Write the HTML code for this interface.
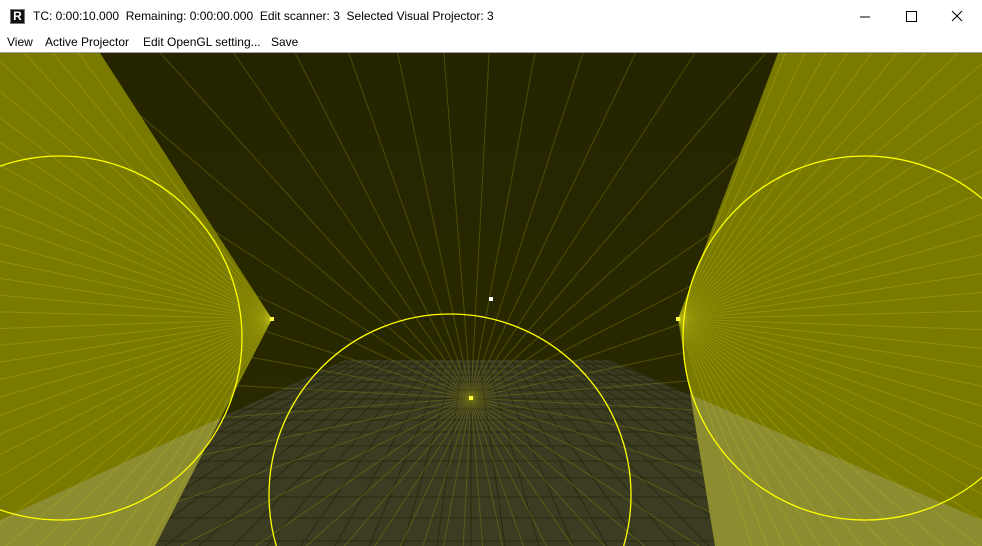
<!DOCTYPE html>
<html><head><meta charset="utf-8"><style>
html,body{margin:0;padding:0;width:982px;height:546px;overflow:hidden;background:#fff;font-family:"Segoe UI","Liberation Sans",sans-serif;}
#title{position:absolute;left:0;top:0;width:982px;height:31px;background:#fff;font-size:12px;color:#000;}
#title .t{position:absolute;left:33px;top:9px;white-space:pre;}
#logo{position:absolute;left:10px;top:9px;width:15px;height:15px;background:#111;border:1px solid #777;box-sizing:border-box;color:#fff;font-weight:bold;font-size:12px;line-height:13px;text-align:center;}
#menu{position:absolute;left:0;top:31px;height:21px;width:982px;font-size:12px;}
#menu span{position:absolute;top:4px;}
#sep{position:absolute;left:0;top:52px;width:982px;height:1px;background:#a0a0a0;}
svg#c{position:absolute;left:0;top:53px;display:block;}
.wb{position:absolute;top:6px;width:46px;height:20px;}
</style></head><body>
<div id="title"><div id="logo">R</div><div class="t">TC: 0:00:10.000  Remaining: 0:00:00.000  Edit scanner: 3  Selected Visual Projector: 3</div>
<svg class="wb" style="left:842px" width="46" height="20"><line x1="18" y1="11" x2="28" y2="11" stroke="#000"/></svg>
<svg class="wb" style="left:888px" width="46" height="20"><rect x="18.5" y="5.5" width="10" height="10" fill="none" stroke="#000"/></svg>
<svg class="wb" style="left:934px" width="46" height="20"><path d="M18 5 L28 15 M28 5 L18 15" stroke="#000"/></svg>
</div>
<div id="menu"><span style="left:7px">View</span><span style="left:45px">Active Projector</span><span style="left:143px">Edit OpenGL setting...</span><span style="left:271px">Save</span></div>
<div id="sep"></div>
<svg id="c" width="982" height="493" viewBox="0 53 982 493">
<defs><linearGradient id="bg" x1="0" y1="0" x2="0" y2="1"><stop offset="0" stop-color="#242400"/><stop offset="1" stop-color="#2b2b00"/></linearGradient>
<clipPath id="fc"><polygon points="0,520 345,360 610,360 982,520 982,546 0,546"/></clipPath>
<clipPath id="cl"><polygon points="0,53 100,53 272,319 155,546 0,546"/></clipPath>
<clipPath id="cr"><polygon points="778,53 982,53 982,546 715,546 678,319"/></clipPath>
</defs>
<rect x="0" y="53" width="982" height="493" fill="url(#bg)"/>
<g id="floor" clip-path="url(#fc)"></g>
<g id="rays"></g>
<g id="cones"></g>
<g fill="none" stroke="#ffff00" stroke-width="1.3">
<circle cx="60" cy="338" r="182"/>
<circle cx="865" cy="338" r="182"/>
<circle cx="450" cy="495" r="181"/>
</g>
<rect x="489" y="297" width="4" height="4" fill="#fff"/>
<rect x="469" y="396" width="4" height="4" fill="#ffff40"/>
<rect x="270" y="317" width="4" height="4" fill="#ffff40"/>
<rect x="676" y="317" width="4" height="4" fill="#ffff40"/>
</svg>
<script>
var NS="http://www.w3.org/2000/svg";
function el(p,n,a){var e=document.createElementNS(NS,n);for(var k in a)e.setAttribute(k,a[k]);p.appendChild(e);return e;}
var fl=document.getElementById('floor');
el(fl,'rect',{x:0,y:360,width:982,height:186,fill:"#3c3c22"});
for(var i=-40;i<=40;i++){el(fl,'line',{x1:471+i*8,y1:360,x2:471+i*34,y2:546,stroke:"#2a2a12","stroke-width":"1"});}
var ys=[364,369,375,382,390,399,409,420,432,446,461,478,497,518,541];
ys.forEach(function(y){el(fl,'line',{x1:0,y1:y,x2:982,y2:y,stroke:"#2a2a12","stroke-width":"1"});});
var r=document.getElementById('rays');
for(var a=0;a<360;a+=7.5){var t=(a+3)*Math.PI/180;el(r,'line',{x1:471,y1:398,x2:471+900*Math.cos(t),y2:398+900*Math.sin(t),stroke:"#8a8a10","stroke-opacity":"0.4","stroke-width":"1"});}
var c=document.getElementById('cones');
var g1=el(c,'g',{'clip-path':'url(#cl)'});var g2=el(c,'g',{'clip-path':'url(#cr)'});
[g1,g2].forEach(function(g){
el(g,'rect',{x:0,y:53,width:982,height:493,fill:"#7a7a00"});
el(g,'polygon',{points:"0,520 345,360 610,360 982,520 982,546 0,546",fill:"#8c8c30"});
});
function fan(g,ax,ay,dir){for(var a=-75;a<=75;a+=3.5){var t=a*Math.PI/180;el(g,'line',{x1:ax,y1:ay,x2:ax+dir*1000*Math.cos(t),y2:ay+1000*Math.sin(t),stroke:"#c8c820","stroke-opacity":"0.28","stroke-width":"1"});}}
fan(g1,272,319,-1);fan(g2,678,319,1);
</script>
</body></html>
